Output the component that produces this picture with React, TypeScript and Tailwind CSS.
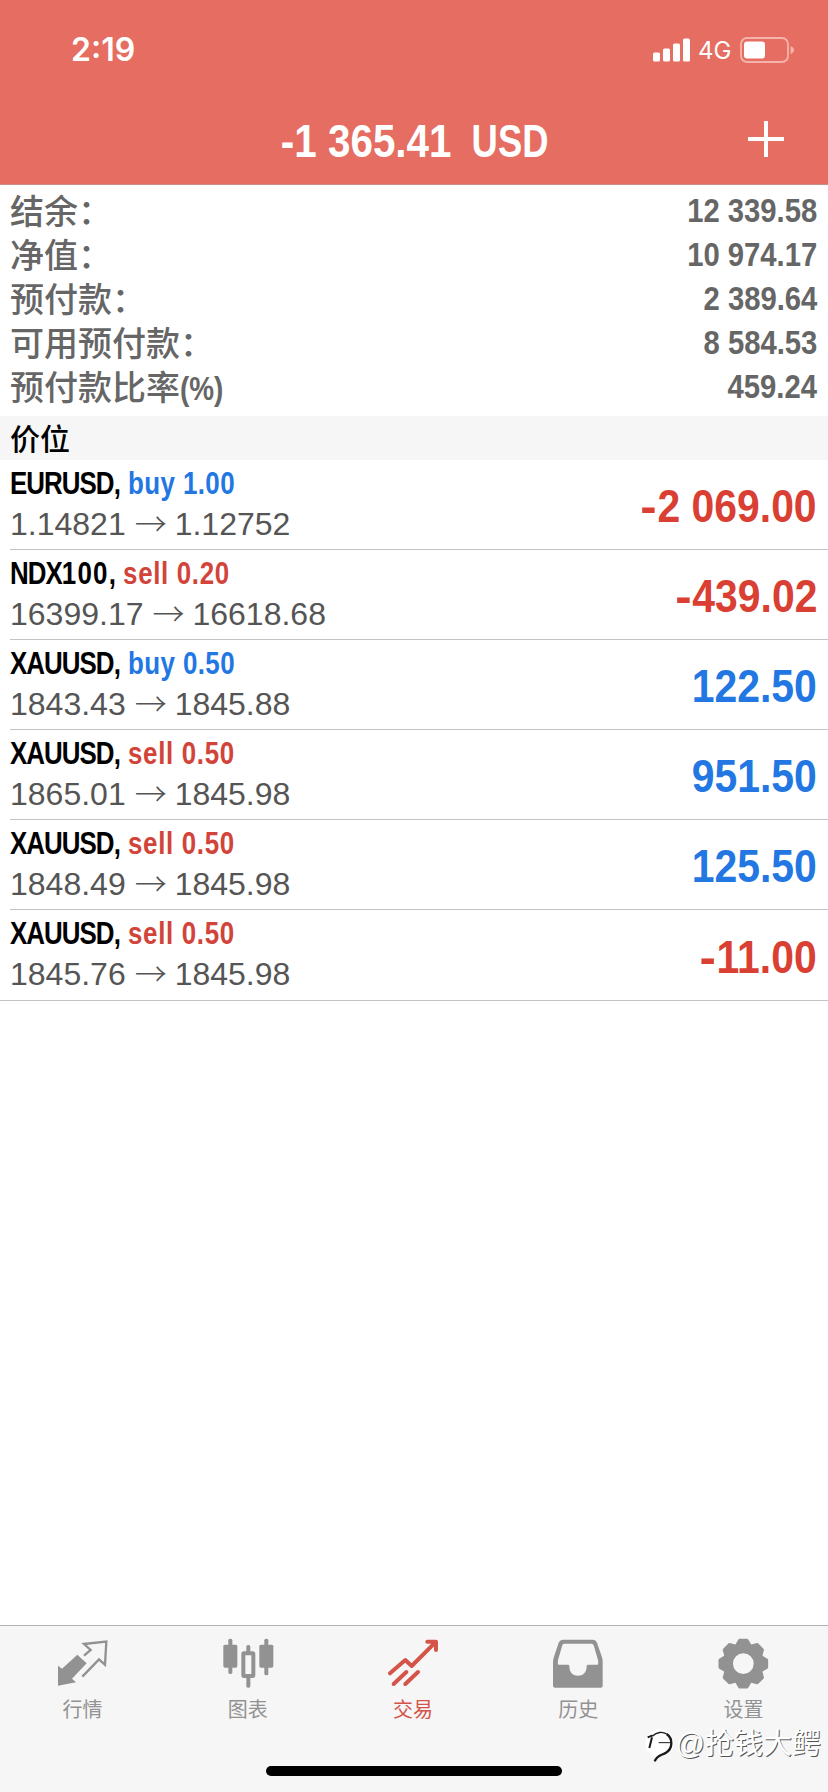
import type { ReactNode } from 'react';

type IPosition = {
  symbol: string;
  side: 'buy' | 'sell';
  volume: string;
  open: string;
  current: string;
  profit: string;
};

const summary = [
  { label: '结余：', value: '12 339.58' },
  { label: '净值：', value: '10 974.17' },
  { label: '预付款：', value: '2 389.64' },
  { label: '可用预付款：', value: '8 584.53' },
  { label: '预付款比率', unit: '(%)', value: '459.24' },
];

const positions: IPosition[] = [
  { symbol: 'EURUSD', side: 'buy', volume: '1.00', open: '1.14821', current: '1.12752', profit: '-2 069.00' },
  { symbol: 'NDX100', side: 'sell', volume: '0.20', open: '16399.17', current: '16618.68', profit: '-439.02' },
  { symbol: 'XAUUSD', side: 'buy', volume: '0.50', open: '1843.43', current: '1845.88', profit: '122.50' },
  { symbol: 'XAUUSD', side: 'sell', volume: '0.50', open: '1865.01', current: '1845.98', profit: '951.50' },
  { symbol: 'XAUUSD', side: 'sell', volume: '0.50', open: '1848.49', current: '1845.98', profit: '125.50' },
  { symbol: 'XAUUSD', side: 'sell', volume: '0.50', open: '1845.76', current: '1845.98', profit: '-11.00' },
];

const StatusBar = () => (
  <div className="flex h-[99px] items-center justify-between pr-[34px] pl-[71px] font-['Inter',sans-serif]">
    <span className="text-[32px] leading-none font-semibold">2:19</span>
    <div className="flex items-center">
      <svg className="h-6 w-[37px]" viewBox="0 0 37 24" fill="currentColor">
        <rect x="0" y="14.5" width="7" height="9" rx="1.5" />
        <rect x="10" y="10.5" width="7" height="13" rx="1.5" />
        <rect x="20" y="5.5" width="7" height="18" rx="1.5" />
        <rect x="30" y="0.5" width="7" height="23" rx="1.5" />
      </svg>
      <span className="mt-0.5 ml-2 w-[34px] text-[24px] leading-none">4G</span>
      <svg className="ml-2 h-[26px] w-[54px]" viewBox="0 0 54 26">
        <rect x="1" y="1" width="47" height="24" rx="6" fill="none" stroke="#f5b3ab" strokeWidth="1.8" />
        <rect x="4" y="4.5" width="21" height="17" rx="3" fill="#fff" />
        <path d="M50.5 9 Q54 10.5 54 13 Q54 15.5 50.5 17Z" fill="#f5b3ab" />
      </svg>
    </div>
  </div>
);

const Header = () => (
  <header className="h-[185px] border-b border-[#c98d87] bg-[#e56d61] text-white">
    <StatusBar />
    <div className="grid grid-cols-[1fr_auto_1fr] items-center">
      <span />
      <h1 className="scale-x-[0.86] text-[47px] leading-[84px] font-bold whitespace-nowrap">
        -1 365.41 <span className="inline-block origin-right scale-x-[0.9]">USD</span>
      </h1>
      <svg className="mr-[44px] mb-1 h-9 w-9 justify-self-end" viewBox="0 0 36 36" stroke="currentColor" strokeWidth="4">
        <path d="M18 0V36M0 18H36" />
      </svg>
    </div>
  </header>
);

// Letters are set tighter than digits
const SymbolName = (props: { children: string }) => (
  <>
    {props.children.split(/(\d+)/).map((part, index) => (
      <span key={index} className={index % 2 ? 'tracking-[1.5px]' : 'tracking-[-1.2px]'}>
        {part}
      </span>
    ))}
  </>
);

const PositionRow = (props: { position: IPosition; last: boolean }) => {
  const { symbol, side, volume, open, current, profit } = props.position;
  const isLoss = profit.startsWith('-');

  return (
    <li className={props.last ? 'border-b border-[#c3c3c3] pl-2.5' : 'pl-2.5'}>
      <div
        className={`flex h-[90px] items-center justify-between pr-[11px] ${props.last ? '' : 'border-b border-[#c3c3c3]'}`}
      >
        <div className="pb-0.5 whitespace-nowrap">
          <div className="origin-left scale-x-[0.81] text-[32px] leading-[41px] font-bold text-black">
            <SymbolName>{symbol}</SymbolName>,{' '}
            <span className={side === 'buy' ? 'tracking-[0.5px] text-[#2277e3]' : 'tracking-[0.8px] text-[#d2443a]'}>
              {side} {volume}
            </span>
          </div>
          <div className="flex text-[32px] leading-[41px] text-[#555]">
            {open}
            <span className="mx-[9px] -mt-0.5 w-[31px] font-['Noto_Sans_CJK_SC',sans-serif] font-light">→</span>
            {current}
          </div>
        </div>
        <div
          className={`origin-right scale-x-[0.87] pt-0.5 text-[47px] leading-none font-bold ${
            isLoss ? 'text-[#d93f33]' : 'text-[#2277e3]'
          }`}
        >
          {isLoss && <span className="mr-1 inline-block origin-left scale-x-[1.2]">-</span>}
          {profit.replace('-', '')}
        </div>
      </div>
    </li>
  );
};

const QuotesIcon = () => (
  <>
    <path d="M0 83L12 92L58 50L86 76L42 122L54 133L0 143Z" fill="currentColor" />
    <path d="M78 53L98 36L78 18L145 11L141 80L123 64L73 116" fill="none" stroke="currentColor" strokeWidth="7" />
  </>
);

const ChartIcon = () => (
  <g fill="currentColor">
    <rect x="1" y="20" width="42" height="69" rx="5" />
    <rect x="16" y="2" width="12" height="106" rx="5" />
    <rect x="70" y="21" width="12" height="30" rx="5" />
    <rect x="70" y="110" width="12" height="39" rx="5" />
    <rect x="61" y="46" width="30" height="68" rx="2" fill="none" stroke="currentColor" strokeWidth="12" />
    <rect x="109" y="20" width="42" height="69" rx="5" />
    <rect x="124" y="2" width="12" height="110" rx="5" />
  </g>
);

const TradeIcon = () => (
  <path
    d="M6 106L52 66L71 84L142 13M118 11H144V36M17 138L55 102M52 138L90 102"
    fill="none"
    stroke="currentColor"
    strokeWidth="12"
    strokeLinecap="round"
    strokeLinejoin="round"
  />
);

const HistoryIcon = () => (
  <path
    d="M30 5H119Q128 5 132 14L147 58Q149 64 149 75V143Q149 149 143 149H6Q0 149 0 143V75Q0 64 3 56L17 14Q21 5 30 5Z M33 17H116Q120 17 122 22L135 66Q137 80 134 80H105Q101 80 101 84C101 105 89 113 75 113C61 113 49 105 49 84Q49 80 45 80H17Q13 80 15 66L28 22Q29 17 33 17Z"
    fill="currentColor"
    fillRule="evenodd"
  />
);

const SettingsIcon = () => (
  <g stroke="currentColor" strokeLinejoin="round">
    <circle cx="76" cy="77" r="46" fill="none" strokeWidth="30" />
    {[0, 45, 90, 135, 180, 225, 270, 315].map((angle) => (
      <path
        key={angle}
        d="M55 24L65 7H87L97 24Z"
        fill="currentColor"
        strokeWidth="9"
        transform={`rotate(${angle} 76 77)`}
      />
    ))}
  </g>
);

const Tab = (props: { label: string; active?: boolean; children: ReactNode }) => (
  <div
    className={`flex flex-1 flex-col items-center pt-[12px] ${props.active ? 'text-[#d4544a]' : 'text-[#929292]'}`}
  >
    <svg className="h-[50px] w-[50px] overflow-visible" viewBox="0 0 150 150">
      {props.children}
    </svg>
    <span className="mt-[7px] text-[20px] leading-[30px]">{props.label}</span>
  </div>
);

const Watermark = () => (
  <div className="absolute right-[7px] bottom-[27px] flex items-center text-white">
    <svg className="mt-1 mr-0.5 h-8 w-7 overflow-visible" viewBox="0 0 84 96">
      <circle cx="40" cy="40" r="42" fill="#fff" />
      <g fill="none" stroke="#1a1a1a">
        <path d="M5 22L20 16M18 22L10 54" strokeWidth="6" />
        <path d="M20 18C32 6 50 4 62 12" strokeWidth="4" />
        <path d="M62 12C82 26 80 56 60 68C48 76 34 74 26 94" strokeWidth="7" />
        <path d="M38 38H76" strokeWidth="3" />
      </g>
    </svg>
    <span className="text-[29px] leading-[42px] [text-shadow:1px_1px_0_#555]">@抢钱大鳄</span>
  </div>
);

const App = () => (
  <div className="flex h-[1792px] w-[828px] flex-col bg-white font-['Liberation_Sans','Noto_Sans_CJK_SC',sans-serif]">
    <Header />

    {/* Account summary */}
    <dl className="h-[231px] pt-[3px] pr-[11px] pl-2.5 text-[34px] text-[#666]">
      {summary.map((item) => (
        <div key={item.label} className="flex h-11 justify-between">
          <dt className="leading-[48px] font-medium">
            {item.label}
            {item.unit && <span className="inline-block origin-left scale-x-[0.82] font-bold">{item.unit}</span>}
          </dt>
          <dd className="origin-right scale-x-[0.86] leading-[44px] font-bold">{item.value}</dd>
        </div>
      ))}
    </dl>

    <h2 className="h-11 bg-[#f6f6f6] pl-2.5 font-['Noto_Sans_CJK_SC',sans-serif] text-[30px] leading-[42px] font-medium text-black">
      价位
    </h2>

    {/* Open positions */}
    <ul>
      {positions.map((position, index) => (
        <PositionRow key={index} position={position} last={index === positions.length - 1} />
      ))}
    </ul>

    {/* Tab bar */}
    <nav className="relative mt-auto flex h-[167px] flex-col items-center justify-between border-t border-[#b2b2b2] bg-[#f6f6f6] pb-4">
      <div className="flex w-full pr-0.5">
        <Tab label="行情">
          <QuotesIcon />
        </Tab>
        <Tab label="图表">
          <ChartIcon />
        </Tab>
        <Tab label="交易" active>
          <TradeIcon />
        </Tab>
        <Tab label="历史">
          <HistoryIcon />
        </Tab>
        <Tab label="设置">
          <SettingsIcon />
        </Tab>
      </div>
      <div className="h-2.5 w-[296px] rounded-full bg-black" />
      <Watermark />
    </nav>
  </div>
);

export default App;
